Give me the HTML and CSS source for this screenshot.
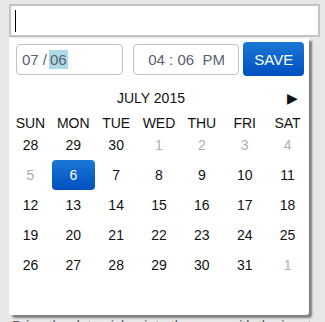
FILE: index.html
```html
<!DOCTYPE html>
<html>
<head>
    <meta charset="utf-8">
    <title>Date picker</title>
    <link rel="stylesheet" href="styles.css">
</head>
<body>
    <div class="input"><span class="caret"></span></div>

    <div class="picker">
        <div class="controls">
            <div class="box date">07 /<span class="sel">06</span></div>
            <div class="box time">04 : 06 &nbsp;PM</div>
            <button class="save">SAVE</button>
        </div>

        <div class="month">
            <span></span>
            <span class="title">JULY 2015</span>
            <span class="next">&#9654;</span>
        </div>

        <div class="days head">
            <span>SUN</span><span>MON</span><span>TUE</span><span>WED</span><span>THU</span><span>FRI</span><span>SAT</span>
        </div>
        <div class="days">
            <span>28</span><span>29</span><span>30</span><span class="off">1</span><span class="off">2</span><span class="off">3</span><span class="off">4</span>
            <span class="off">5</span><span class="today">6</span><span>7</span><span>8</span><span>9</span><span>10</span><span>11</span>
            <span>12</span><span>13</span><span>14</span><span>15</span><span>16</span><span>17</span><span>18</span>
            <span>19</span><span>20</span><span>21</span><span>22</span><span>23</span><span>24</span><span>25</span>
            <span>26</span><span>27</span><span>28</span><span>29</span><span>30</span><span>31</span><span class="off">1</span>
        </div>
    </div>

    <p class="below">Bring the date picker into the page with the input above.</p>
</body>
</html>
```

FILE: styles.css
```css
body {
    margin: 0;
    padding: 4px 5px 0 9px;
    background: #e7e7e7;
    font-family: "Liberation Sans", Arial, sans-serif;
    color: #111;
}

.input {
    height: 29px;
    border: 2px solid #c4c4c4;
    background: #fff;
    padding: 0 0 0 4px;
    display: flex;
    align-items: center;
}

.caret {
    width: 1px;
    height: 22px;
    background: #000;
}

.picker {
    width: 300px;
    height: 277px;
    margin-top: 1px;
    background: #fff;
    box-shadow: 3px 3px 2px rgba(0,0,0,0.45);
    border-radius: 0 0 3px 3px;
}

.controls {
    display: flex;
    align-items: center;
    padding: 4px 5px 0 7px;
}

.box {
    height: 29px;
    border: 1px solid #c2c2c2;
    border-radius: 4px;
    font-size: 15px;
    color: #5a6170;
    display: flex;
    align-items: center;
}

.date {
    width: 101px;
    padding-left: 5px;
}

.sel {
    background: #acd9e6;
    margin-left: 2px;
    padding: 1px 1px;
    line-height: 17px;
}

.time {
    width: 91px;
    margin-left: 10px;
    padding-left: 14px;
}

.save {
    margin-left: 4px;
    width: 61px;
    height: 34px;
    border: none;
    border-radius: 4px;
    background: linear-gradient(#1a78d4, #0050c0);
    color: #fff;
    font-family: "Liberation Sans", Arial, sans-serif;
    font-size: 15px;
    padding: 0;
}

.month {
    display: grid;
    grid-template-columns: 1fr auto 1fr;
    align-items: center;
    height: 24px;
    margin-top: 10px;
    padding-right: 16px;
    font-size: 14px;
}

.next {
    justify-self: end;
    margin-right: -5px;
    font-size: 14px;
}

.days {
    display: grid;
    grid-template-columns: repeat(7, 1fr);
    text-align: center;
    font-size: 14px;
}

.days span {
    height: 30px;
    line-height: 30px;
}

.days.head {
    margin-top: 6px;
}

.days.head span {
    height: 14px;
    line-height: 14px;
}

.days .off {
    color: #aab0b8;
}

.days .today {
    background: linear-gradient(#1a78d4, #0050c0);
    color: #fff;
    border-radius: 4px;
}

.below {
    margin: 3px 0 0 3px;
    font-size: 14px;
    color: #555;
}
```
